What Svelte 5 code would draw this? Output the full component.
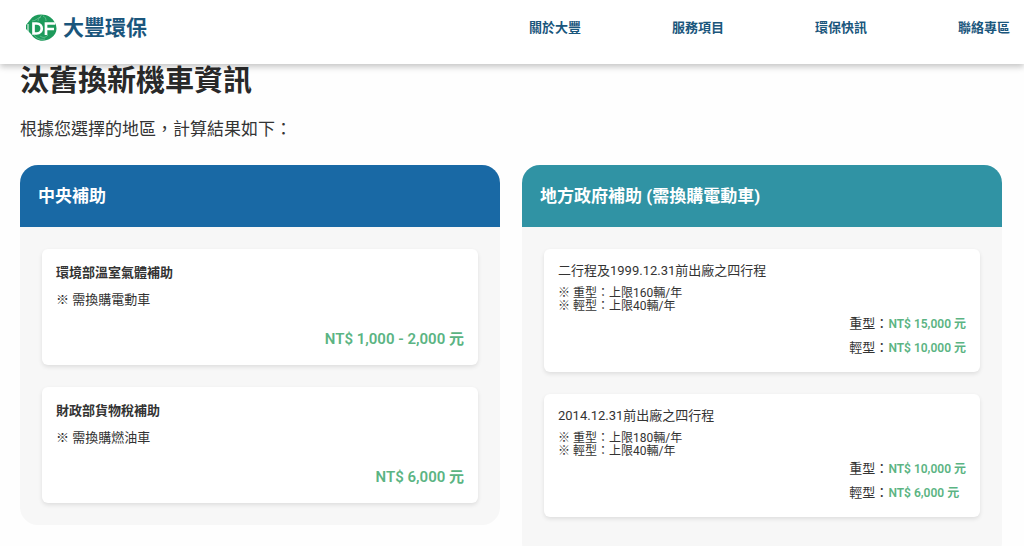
<script>
  const links = ['關於大豐', '服務項目', '環保快訊', '聯絡專區'];

  const central = [
    { title: '環境部溫室氣體補助', note: '※ 需換購電動車', price: 'NT$ 1,000 - 2,000 元' },
    { title: '財政部貨物稅補助', note: '※ 需換購燃油車', price: 'NT$ 6,000 元' }
  ];

  const local = [
    {
      title: '二行程及1999.12.31前出廠之四行程',
      limits: ['※ 重型：上限160輛/年', '※ 輕型：上限40輛/年'],
      prices: [['重型：', 'NT$ 15,000 元'], ['輕型：', 'NT$ 10,000 元']]
    },
    {
      title: '2014.12.31前出廠之四行程',
      limits: ['※ 重型：上限180輛/年', '※ 輕型：上限40輛/年'],
      prices: [['重型：', 'NT$ 10,000 元'], ['輕型：', 'NT$ 6,000 元']]
    }
  ];
</script>

<div class="page" lang="zh-Hant-TW">
  <header>
    <a class="brand" href="#home">
      <svg viewBox="0 0 32 28" width="32" height="28" aria-hidden="true">
        <path d="M5 6C9 0 18-1 25 3c8 6 9 16 1 21-7 5-16 3-20-4L1 15v-4z" fill="#1d9a5b" />
        <path d="M7 7c4 0 5-3 9-4m-3 4c0-3 3-4 4-7m4 7c0-3-1-4-3-5m-9 19c3 4 7 5 11 4m-5-3c3 2 5 2 8-1" fill="none" stroke="#a6dcbc" stroke-width="1" opacity=".45" />
        <path d="M8.500 9.500v10h3c7 0 7-10 0-10zM21 21V9.500h9M21 15h8" fill="none" stroke="#fff" stroke-width="2.700" />
        <path d="M3 10v8" stroke="#fff" stroke-width="1" />
      </svg>
      <span>大豐環保</span>
    </a>
    <nav>
      {#each links as link}
        <a href="#{link}">{link}</a>
      {/each}
    </nav>
  </header>

  <main>
    <h1>汰舊換新機車資訊</h1>
    <p class="lead">根據您選擇的地區，計算結果如下：</p>

    <div class="columns">
      <section>
        <h2>中央補助</h2>
        <div class="list">
          {#each central as item}
            <article>
              <h3>{item.title}</h3>
              <p class="note">{item.note}</p>
              <p class="total">{item.price}</p>
            </article>
          {/each}
        </div>
      </section>

      <section class="local">
        <h2>地方政府補助 (需換購電動車)</h2>
        <div class="list">
          {#each local as item}
            <article>
              <h3>{item.title}</h3>
              <ul>
                {#each item.limits as limit}
                  <li>{limit}</li>
                {/each}
              </ul>
              <div class="prices">
                {#each item.prices as [label, price]}
                  <p>{label}<strong>{price}</strong></p>
                {/each}
              </div>
            </article>
          {/each}
        </div>
      </section>
    </div>
  </main>
</div>

<style>
  :global(body) {
    margin: 0;
    background: #fefefe;
  }

  .page {
    font-family: Roboto, "Noto Sans CJK TC", sans-serif;
    color: #333;
  }

  h1, h2, h3, p, ul {
    margin: 0;
    padding: 0;
  }

  header {
    position: sticky;
    top: 0;
    z-index: 1;
    display: flex;
    align-items: center;
    justify-content: space-between;
    box-sizing: border-box;
    height: 64px;
    padding: 0 14px 8px 25px;
    background: #fff;
    box-shadow: 0 3px 6px rgba(0, 0, 0, 0.22);
  }

  header a {
    color: #1a567c;
    text-decoration: none;
  }

  .brand {
    display: flex;
    align-items: center;
    gap: 6px;
    font-size: 21px;
    line-height: 28px;
    font-weight: 600;
  }

  nav {
    display: flex;
    gap: 91px;
    font-size: 13px;
    line-height: 20px;
    font-weight: 700;
  }

  main {
    padding: 0 22px 0 20px;
  }

  h1 {
    font-size: 29px;
    line-height: 34px;
    color: #292929;
  }

  .lead {
    margin: 18px 0 23px;
    font-size: 17px;
    line-height: 26px;
  }

  .columns {
    display: grid;
    grid-template-columns: 1fr 1fr;
    align-items: start;
    gap: 22px;
  }

  section {
    overflow: hidden;
    border-radius: 18px;
    background: #f7f7f7;
  }

  h2 {
    padding: 18px;
    background: #1969a5;
    color: #fff;
    font-size: 17px;
    line-height: 26px;
  }

  .local h2 {
    background: #3093a4;
  }

  .list {
    display: grid;
    gap: 22px;
    padding: 22px;
  }

  .local .list {
    padding-bottom: 44px;
  }

  article {
    padding: 14px;
    border-radius: 6px;
    background: #fff;
    box-shadow: 0 2px 4px rgba(0, 0, 0, 0.1);
  }

  h3 {
    font-size: 13px;
    line-height: 20px;
  }

  .local article {
    padding: 12px 14px;
  }

  .local h3 {
    font-weight: 400;
  }

  .note {
    margin-top: 7px;
    font-size: 13px;
    line-height: 20px;
  }

  .total {
    margin-top: 17px;
    color: #5bb483;
    font-size: 15px;
    line-height: 24px;
    font-weight: 600;
    text-align: right;
  }

  ul {
    margin-top: 6px;
    list-style: none;
    font-size: 12px;
    line-height: 13px;
  }

  .prices {
    width: max-content;
    margin-left: auto;
    font-size: 13px;
    line-height: 24px;
  }

  .local .prices {
    margin-top: -1px;
  }

  strong {
    color: #5bb483;
    font-size: 12px;
    font-weight: 600;
  }
</style>
